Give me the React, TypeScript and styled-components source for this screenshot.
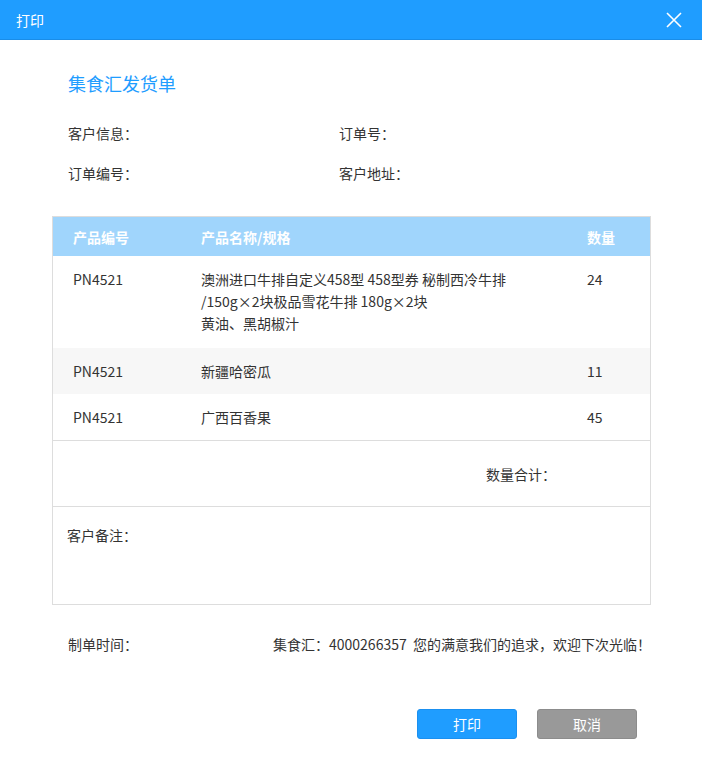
import styled, { createGlobalStyle } from 'styled-components'

const GlobalStyle = createGlobalStyle`
  html, body {
    margin: 0;
    padding: 0;
    background: #fff;
  }
  body {
    font-family: "Noto Sans CJK SC", "Noto Sans", sans-serif;
    font-size: 14px;
    color: #333;
  }
`

const rows = [
  {
    code: 'PN4521',
    name: ['澳洲进口牛排自定义458型 458型券 秘制西冷牛排', '/150g×2块极品雪花牛排  180g×2块', '黄油、黑胡椒汁'],
    qty: '24',
  },
  { code: 'PN4521', name: ['新疆哈密瓜'], qty: '11' },
  { code: 'PN4521', name: ['广西百香果'], qty: '45' },
]

const App = () => {
  return (
    <Dialog>
      <GlobalStyle />
      <TitleBar>
        <TitleText>打印</TitleText>
        <CloseBtn aria-label="close">
          <svg width="16" height="16" viewBox="0 0 16 16">
            <path d="M1 1 L15 15 M15 1 L1 15" stroke="#fff" strokeWidth="1.6" fill="none" />
          </svg>
        </CloseBtn>
      </TitleBar>
      <Body>
        <DocTitle>集食汇发货单</DocTitle>
        <InfoGrid>
          <InfoItem>客户信息：</InfoItem>
          <InfoItem>订单号：</InfoItem>
          <InfoItem>订单编号：</InfoItem>
          <InfoItem>客户地址：</InfoItem>
        </InfoGrid>
        <Table>
          <HeadRow>
            <span>产品编号</span>
            <span>产品名称/规格</span>
            <span>数量</span>
          </HeadRow>
          {rows.map((r, i) => (
            <Row key={i} striped={i % 2 === 1} tall={r.name.length > 1}>
              <span>{r.code}</span>
              <span>
                {r.name.map((line, j) => (
                  <div key={j}>{line}</div>
                ))}
              </span>
              <span>{r.qty}</span>
            </Row>
          ))}
          <SumRow>
            <SumLabel>数量合计：</SumLabel>
          </SumRow>
          <RemarkRow>客户备注：</RemarkRow>
        </Table>
        <Footer>
          <span>制单时间：</span>
          <span>集食汇：4000266357&nbsp;&nbsp;您的满意我们的追求，欢迎下次光临！</span>
        </Footer>
        <Actions>
          <Button variant="primary">打印</Button>
          <Button variant="muted">取消</Button>
        </Actions>
      </Body>
    </Dialog>
  )
}

const Dialog = styled.div`
  width: 702px;
  height: 770px;
  background: #fff;
`

const TitleBar = styled.div`
  height: 39px;
  background: #1f9dff;
  border-bottom: 1px solid #1a8de8;
  display: flex;
  align-items: center;
  justify-content: space-between;
  padding: 0 20px 0 16px;
`

const TitleText = styled.div`
  color: #fff;
  font-size: 14px;
  line-height: 20px;
`

const CloseBtn = styled.div`
  width: 16px;
  height: 16px;
  display: flex;
  align-items: center;
  justify-content: center;
`

const Body = styled.div`
  padding: 0 51px 0 52px;
`

const DocTitle = styled.div`
  margin-top: 31px;
  padding-left: 16px;
  font-size: 18px;
  line-height: 24px;
  color: #1f9dff;
`

const InfoGrid = styled.div`
  margin-top: 28px;
  padding-left: 16px;
  display: grid;
  grid-template-columns: 271px 1fr;
  row-gap: 20px;
`

const InfoItem = styled.div`
  line-height: 20px;
`

const Table = styled.div`
  margin-top: 33px;
  border: 1px solid #ddd;
`

const cols = `
  display: grid;
  grid-template-columns: 128px 386px 1fr;
  padding-left: 20px;
`

const HeadRow = styled.div`
  ${cols}
  height: 39px;
  align-items: center;
  background: #a0d5fc;
  color: #fff;
  font-weight: bold;
  line-height: 20px;
`

const Row = styled.div<{ striped?: boolean; tall?: boolean }>`
  ${cols}
  padding-top: 12px;
  padding-bottom: 12px;
  min-height: ${({ tall }) => (tall ? '68px' : '22px')};
  line-height: 22px;
  background: ${({ striped }) => (striped ? '#f7f7f7' : '#fff')};
`

const SumRow = styled.div`
  height: 65px;
  border-top: 1px solid #ddd;
  display: flex;
  align-items: center;
`

const SumLabel = styled.div`
  margin-left: 433px;
  line-height: 20px;
`

const RemarkRow = styled.div`
  height: 98px;
  border-top: 1px solid #ddd;
  padding: 18px 0 0 14px;
  box-sizing: border-box;
  line-height: 20px;
`

const Footer = styled.div`
  margin-top: 29px;
  padding-left: 16px;
  display: flex;
  justify-content: space-between;
  line-height: 20px;
`

const Actions = styled.div`
  margin-top: 55px;
  padding-right: 14px;
  display: flex;
  justify-content: flex-end;
  gap: 20px;
`

const Button = styled.button<{ variant: 'primary' | 'muted' }>`
  width: 100px;
  height: 30px;
  border-radius: 3px;
  font-family: inherit;
  font-size: 14px;
  color: #fff;
  cursor: pointer;
  background: ${({ variant }) => (variant === 'primary' ? '#1f9dff' : '#999')};
  border: 1px solid ${({ variant }) => (variant === 'primary' ? '#1b90f0' : '#8c8c8c')};
`

export default App
